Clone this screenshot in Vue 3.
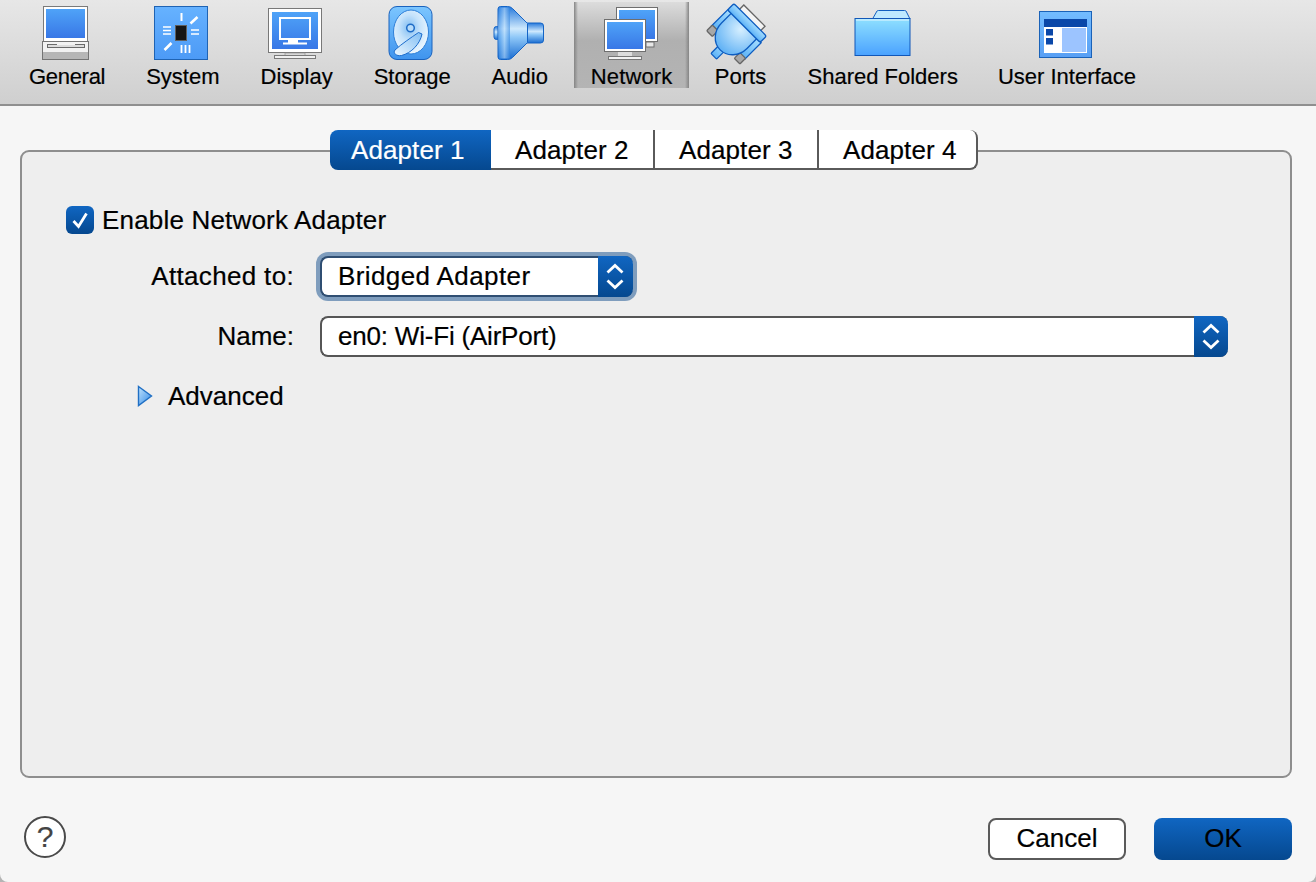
<script setup>
const tabs = ['Adapter 1', 'Adapter 2', 'Adapter 3', 'Adapter 4']
</script>

<template>
  <div class="window">
    <svg class="defs" width="0" height="0" aria-hidden="true">
      <defs>
        <linearGradient id="scr" x1="0" y1="0" x2="0" y2="1"><stop offset="0" stop-color="#4fa3f8"/><stop offset="1" stop-color="#3877e6"/></linearGradient>
        <linearGradient id="sys" x1="0" y1="0" x2="0" y2="1"><stop offset="0" stop-color="#66b2ff"/><stop offset="1" stop-color="#4c9af6"/></linearGradient>
        <linearGradient id="sto" x1="0" y1="0" x2="0" y2="1"><stop offset="0" stop-color="#7cc6ff"/><stop offset="1" stop-color="#3f94ee"/></linearGradient>
        <radialGradient id="disc" cx="0.45" cy="0.4" r="0.65"><stop offset="0" stop-color="#7fbcf2"/><stop offset="0.45" stop-color="#c4e2fb"/><stop offset="1" stop-color="#f2faff"/></radialGradient>
        <linearGradient id="arm" x1="1" y1="0" x2="0" y2="1"><stop offset="0" stop-color="#7fbdf3"/><stop offset="1" stop-color="#eef8ff"/></linearGradient>
        <linearGradient id="aud" x1="0" y1="0" x2="0" y2="1"><stop offset="0" stop-color="#2578dc"/><stop offset="0.42" stop-color="#cfe9fd"/><stop offset="0.58" stop-color="#8fc8f8"/><stop offset="1" stop-color="#1a6cd0"/></linearGradient>
        <linearGradient id="aud2" x1="0" y1="0" x2="1" y2="0"><stop offset="0" stop-color="#3d90e8"/><stop offset="0.5" stop-color="#b8dcfb"/><stop offset="1" stop-color="#2f84e0"/></linearGradient>
        <linearGradient id="prt" x1="0" y1="0" x2="0" y2="1"><stop offset="0" stop-color="#a4dcff"/><stop offset="1" stop-color="#5cb2f6"/></linearGradient>
        <radialGradient id="body" cx="0.5" cy="0.15" r="0.95"><stop offset="0" stop-color="#d6efff"/><stop offset="1" stop-color="#4ea8f3"/></radialGradient>
        <linearGradient id="fold" x1="0" y1="0" x2="0" y2="1"><stop offset="0" stop-color="#8fe0ff"/><stop offset="1" stop-color="#4aa2ff"/></linearGradient>
        <linearGradient id="ui" x1="0" y1="0" x2="0" y2="1"><stop offset="0" stop-color="#73bcff"/><stop offset="1" stop-color="#589ff4"/></linearGradient>
        <linearGradient id="tri" x1="0" y1="0" x2="1" y2="1"><stop offset="0" stop-color="#c2e4fd"/><stop offset="1" stop-color="#2f88e6"/></linearGradient>
      </defs>
    </svg>

    <header class="toolbar">
      <div class="tool tight">
        <svg class="icon" viewBox="37 4 60 60">
          <rect x="43.5" y="6.5" width="44" height="35" fill="#fff" stroke="#7a7a7a"/>
          <rect x="46" y="9" width="39" height="29" fill="url(#scr)"/>
          <rect x="42.5" y="41.5" width="46" height="18" fill="#f2f2f2" stroke="#747474"/>
          <rect x="43" y="52" width="45" height="7" fill="#b6b6b6"/>
          <rect x="47.5" y="44.5" width="37" height="3" fill="#dcdcdc" stroke="#6a6a6a"/>
          <rect x="57" y="42" width="18" height="3" fill="#f2f2f2"/>
        </svg>
        <span>General</span>
      </div>
      <div class="tool">
        <svg class="icon" viewBox="153 4 60 60">
          <rect x="154.5" y="6.5" width="53" height="53" fill="url(#sys)" stroke="#1f63b3"/>
          <rect x="175.5" y="25.5" width="11" height="15" fill="#151515" stroke="#5e5e5e"/>
          <g stroke="#fff" fill="none">
            <path d="M181.5 13v8" stroke-width="2"/>
            <path d="M190.5 23.5l7-6.5M164.5 50l7-7" stroke-width="2.6"/>
            <path d="M163 27h8M163 30.5h8M163 34h8M191 30h8M191 34h8" stroke-width="1.6"/>
            <path d="M181.5 45v8M185.5 45v8M189.5 45v8" stroke-width="1.8"/>
          </g>
        </svg>
        <span>System</span>
      </div>
      <div class="tool">
        <svg class="icon" viewBox="267 4 60 60">
          <rect x="268.5" y="8.5" width="53" height="44" fill="#fff" stroke="#787878"/>
          <rect x="272" y="12" width="46" height="37" fill="url(#scr)"/>
          <rect x="280" y="18" width="30" height="21" fill="none" stroke="#fff" stroke-width="2"/>
          <rect x="288" y="40" width="10" height="3" fill="#fff"/>
          <rect x="283" y="42.5" width="24" height="2" fill="#fff"/>
          <rect x="285" y="53" width="20" height="2.5" fill="#d8d8d8" stroke="#8a8a8a" stroke-width=".6"/>
          <rect x="274.5" y="55.5" width="41" height="3" fill="#f0f0f0" stroke="#7a7a7a"/>
        </svg>
        <span>Display</span>
      </div>
      <div class="tool">
        <svg class="icon" viewBox="382.5 4 60 60">
          <rect x="389.5" y="6.5" width="43" height="53" rx="8" fill="url(#sto)" stroke="#1a62bd"/>
          <ellipse cx="411.5" cy="32" rx="17.5" ry="22" fill="url(#disc)" stroke="#2d7fd8"/>
          <circle cx="411" cy="28" r="3.8" fill="#b7dcfa" stroke="#1e6cc7" stroke-width="1.5"/>
          <path d="M395.5 50C402 44 411 38 419 32.5L422.5 34C420.5 44 412 53 402 55.5C397 56.5 393 53 395.5 50Z" fill="url(#arm)" stroke="#1c6ccc"/>
        </svg>
        <span>Storage</span>
      </div>
      <div class="tool audio">
        <svg class="icon" viewBox="490.5 4 60 60">
          <rect x="494.5" y="26.5" width="6" height="13" rx="2.5" fill="url(#aud)" stroke="#1464c6"/>
          <path d="M527 23H541Q544 23 544 26V40Q544 43 541 43H527Z" fill="url(#aud)" stroke="#1464c6"/>
          <path d="M498.5 9Q498.5 6.5 501 6.5H508Q511 6.5 513 8.5L528 23.5V42.5L513 57.5Q511 59.5 508 59.5H501Q498.5 59.5 498.5 57Z" fill="url(#aud)" stroke="#1464c6"/>
          <rect x="499.5" y="7.5" width="11" height="51" fill="url(#aud2)" opacity=".6"/>
        </svg>
        <span>Audio</span>
      </div>
      <div class="tool active wideText">
        <svg class="icon" viewBox="602 4 60 60">
          <rect x="646" y="42" width="8" height="5" fill="#e6e6e6" stroke="#6e6e6e"/>
          <rect x="616.5" y="7.5" width="41" height="34" fill="#fff" stroke="#6e6e6e"/>
          <rect x="619" y="10" width="36" height="29" fill="url(#scr)"/>
          <rect x="604.5" y="19.5" width="41" height="32" fill="#fff" stroke="#6e6e6e"/>
          <rect x="607" y="22" width="36" height="27" fill="url(#scr)"/>
          <rect x="618" y="52" width="14" height="4.5" fill="#ddd"/>
          <rect x="608.5" y="56.5" width="33" height="3" fill="#f2f2f2" stroke="#777"/>
        </svg>
        <span>Network</span>
      </div>
      <div class="tool ports">
        <svg class="icon" viewBox="711 4 60 60">
          <g transform="rotate(45 748 23)" stroke-width="1.3">
            <rect x="733" y="12.5" width="30" height="8" fill="#f4f4f4" stroke="#666"/>
            <rect x="725" y="27" width="8" height="23" fill="url(#prt)" stroke="#0d5cc0"/>
            <rect x="725" y="49" width="8" height="8" rx="1" fill="#a8a8a8" stroke="#666"/>
            <rect x="764" y="27" width="8" height="23" fill="url(#prt)" stroke="#0d5cc0"/>
            <rect x="764" y="49" width="8" height="8" rx="1" fill="#a8a8a8" stroke="#666"/>
            <rect x="744" y="55" width="8" height="15" rx="1" fill="url(#prt)" stroke="#0d5cc0"/>
            <path d="M730 27H766V41A18 20 0 0 1 730 41Z" fill="url(#body)" stroke="#0d5cc0"/>
            <rect x="725" y="18.5" width="46" height="9" rx="2" fill="url(#prt)" stroke="#0d5cc0"/>
          </g>
        </svg>
        <span>Ports</span>
      </div>
      <div class="tool shared">
        <svg class="icon" viewBox="851.5 4 60 60">
          <path d="M871 19L875.5 11Q876 10.5 877 10.5H903Q904 10.5 904.5 11L908.5 19Z" fill="#bfeaff" stroke="#1260c0"/>
          <rect x="853.5" y="18.5" width="55" height="37" fill="url(#fold)" stroke="#1157b8"/>
          <path d="M854.5 20H907.5" stroke="#e6f8ff" stroke-width="1"/>
        </svg>
        <span>Shared Folders</span>
      </div>
      <div class="tool user">
        <svg class="icon" viewBox="1037 4 60 60">
          <rect x="1039.5" y="11.5" width="52" height="46" fill="url(#ui)" stroke="#1a62b8"/>
          <rect x="1044" y="19" width="43" height="8" fill="#0a47a8"/>
          <rect x="1044" y="27" width="43" height="26" fill="#fff"/>
          <rect x="1062" y="28" width="24" height="24" fill="#9cc4ff"/>
          <rect x="1046" y="29" width="7" height="6.5" fill="#0a47a8"/>
          <rect x="1046" y="38" width="7" height="6.5" fill="#0a47a8"/>
        </svg>
        <span>User Interface</span>
      </div>
    </header>

    <main class="content">
      <nav class="tabs">
        <div v-for="(t, i) in tabs" :key="t" class="tab" :class="'tab' + (i + 1)">{{ t }}</div>
      </nav>
      <section class="panel">
        <div class="check-row">
          <span class="checkbox">
            <svg width="28" height="28" viewBox="0 0 28 28"><path d="M7.5 15l5 5.5L20.5 7.5" fill="none" stroke="#fff" stroke-width="2.8"/></svg>
          </span>
          <span class="enable">Enable Network Adapter</span>
        </div>
        <div class="form">
          <label class="attached">Attached to:</label>
          <div class="select short focus">
            <span class="value bridged">Bridged Adapter</span>
            <span class="stepper"><svg width="34" height="37" viewBox="0 0 34 37"><path d="M9.5 14.5l7.5-7 7.5 7M9.5 22.5l7.5 7 7.5-7" fill="none" stroke="#fff" stroke-width="2.8"/></svg></span>
          </div>
          <label>Name:</label>
          <div class="select wide">
            <span class="value en0">en0: Wi-Fi (AirPort)</span>
            <span class="stepper"><svg width="34" height="37" viewBox="0 0 34 37"><path d="M9.5 14.5l7.5-7 7.5 7M9.5 22.5l7.5 7 7.5-7" fill="none" stroke="#fff" stroke-width="2.8"/></svg></span>
          </div>
        </div>
        <div class="advanced">
          <svg width="16" height="22" viewBox="0 0 16 22"><path d="M1.5 1.5L14.5 11 1.5 20.5Z" fill="url(#tri)" stroke="#1f6fc4" stroke-width="1.4"/></svg>
          <span>Advanced</span>
        </div>
      </section>
      <footer class="footer">
        <div class="help">?</div>
        <div class="btn cancel">Cancel</div>
        <div class="btn ok">OK</div>
      </footer>
    </main>
  </div>
</template>

<style>
html, body { background: #b4b4b4; }
</style>

<style scoped>
.window {
  width: 1316px;
  height: 882px;
  overflow: hidden;
  background: #f6f6f6;
  border-radius: 0 0 8px 8px;
  font-family: "Liberation Sans", Arial, sans-serif;
  font-size: 26px;
  color: #000;
  -webkit-text-stroke: 0.2px currentColor;
  display: flex;
  flex-direction: column;
}
.defs { position: absolute; }
.toolbar {
  height: 104px;
  flex: none;
  box-sizing: content-box;
  border-bottom: 2px solid #8f8f8f;
  background: linear-gradient(#e7e7e7, #cfcfcf);
  padding-left: 12px;
  display: flex;
  gap: 7px;
}
.tool {
  height: 84px;
  margin-top: 2px;
  padding: 2px 17px 0;
  display: flex;
  flex-direction: column;
  align-items: center;
  font-size: 22px;
  white-space: nowrap;
}
.tight { letter-spacing: -0.3px; }
.wideText { letter-spacing: 0.15px; }
.audio { margin-left: -2px; }
.ports { margin-left: -3px; }
.shared { margin-left: -4px; }
.user { margin-left: -1px; }
.tool span { line-height: 24px; height: 24px; margin-top: 1px; }
.icon { width: 60px; height: 60px; flex: none; overflow: visible; }
.tool.active {
  background:
    linear-gradient(90deg, #858585, rgba(133,133,133,0) 4px, rgba(133,133,133,0) calc(100% - 4px), #858585),
    linear-gradient(#dcdcdc, #b0b0b0 45%, #b4b4b4);
}
.content { padding: 24px 24px 0 20px; flex: 1; }
.tabs {
  display: flex;
  height: 40px;
  margin: 0 0 -20px 310px;
  position: relative;
  z-index: 1;
  width: max-content;
  line-height: 40px;
  letter-spacing: 0.1px;
}
.tab {
  background: #fff;
  box-sizing: border-box;
  height: 40px;
  border-bottom: 2px solid #5a5a5a;
  white-space: nowrap;
}
.tab1 {
  width: 161px;
  padding-left: 21px;
  color: #fff;
  background: linear-gradient(#1066c2, #05488f);
  border-bottom: 0;
  border-radius: 8px 0 0 8px;
}
.tab2 { width: 164px; padding-left: 24px; border-right: 2px solid #5a5a5a; }
.tab3 { width: 164px; padding-left: 24px; border-right: 2px solid #5a5a5a; }
.tab4 { width: 159px; padding-left: 24px; border-right: 2px solid #5a5a5a; border-radius: 0 8px 8px 0; }
.panel {
  box-sizing: border-box;
  width: 1272px;
  height: 628px;
  background: #eeeeee;
  border: 2px solid #8e8e8e;
  border-radius: 9px;
  padding: 54px 44px 0;
}
.check-row { display: flex; align-items: center; height: 28px; gap: 8px; }
.enable { letter-spacing: 0.18px; }
.attached { letter-spacing: 0.33px; }
.bridged { letter-spacing: 0.4px; }
.en0 { letter-spacing: -0.2px; }
.checkbox {
  width: 28px;
  height: 28px;
  border-radius: 6px;
  background: linear-gradient(#1066c2, #05488f);
  display: block;
}
.checkbox svg { display: block; }
.form {
  margin-top: 22px;
  display: grid;
  grid-template-columns: 228px auto;
  column-gap: 26px;
  row-gap: 19px;
  justify-items: start;
  align-items: center;
}
.form label { justify-self: end; line-height: 41px; }
.select {
  box-sizing: border-box;
  height: 41px;
  background: #fff;
  border: 2px solid #565656;
  border-right: 0;
  border-radius: 8px;
  display: flex;
  justify-content: space-between;
  line-height: 37px;
}
.short { width: 313px; }
.short .stepper { width: 35px; }
.wide { width: 908px; }
.focus {
  border-color: #2f4e72;
  box-shadow: 0 0 0 4px #7f9dbd;
}
.value { padding-left: 16px; white-space: nowrap; }
.stepper {
  width: 34px;
  height: 41px;
  margin-top: -2px;
  background: linear-gradient(#1066c2, #05488f);
  border-radius: 0 8px 8px 0;
  display: flex;
  align-items: center;
}
.advanced {
  margin-top: 24px;
  padding-left: 71px;
  height: 30px;
  display: flex;
  align-items: center;
  gap: 15px;
}
.footer {
  margin-top: 40px;
  display: flex;
  align-items: flex-start;
  gap: 28px;
}
.help {
  box-sizing: border-box;
  width: 42px;
  height: 42px;
  margin: -2px auto 0 4px;
  border: 2px solid #4a4a4a;
  border-radius: 50%;
  background: #fff;
  color: #444;
  text-align: center;
  font-size: 30px;
  line-height: 38px;
}
.btn {
  box-sizing: border-box;
  width: 138px;
  height: 42px;
  border-radius: 8px;
  text-align: center;
  line-height: 36px;
}
.cancel { background: #fff; border: 2px solid #5a5a5a; }
.ok { background: linear-gradient(#1066c2, #05488f); line-height: 40px; }
</style>
